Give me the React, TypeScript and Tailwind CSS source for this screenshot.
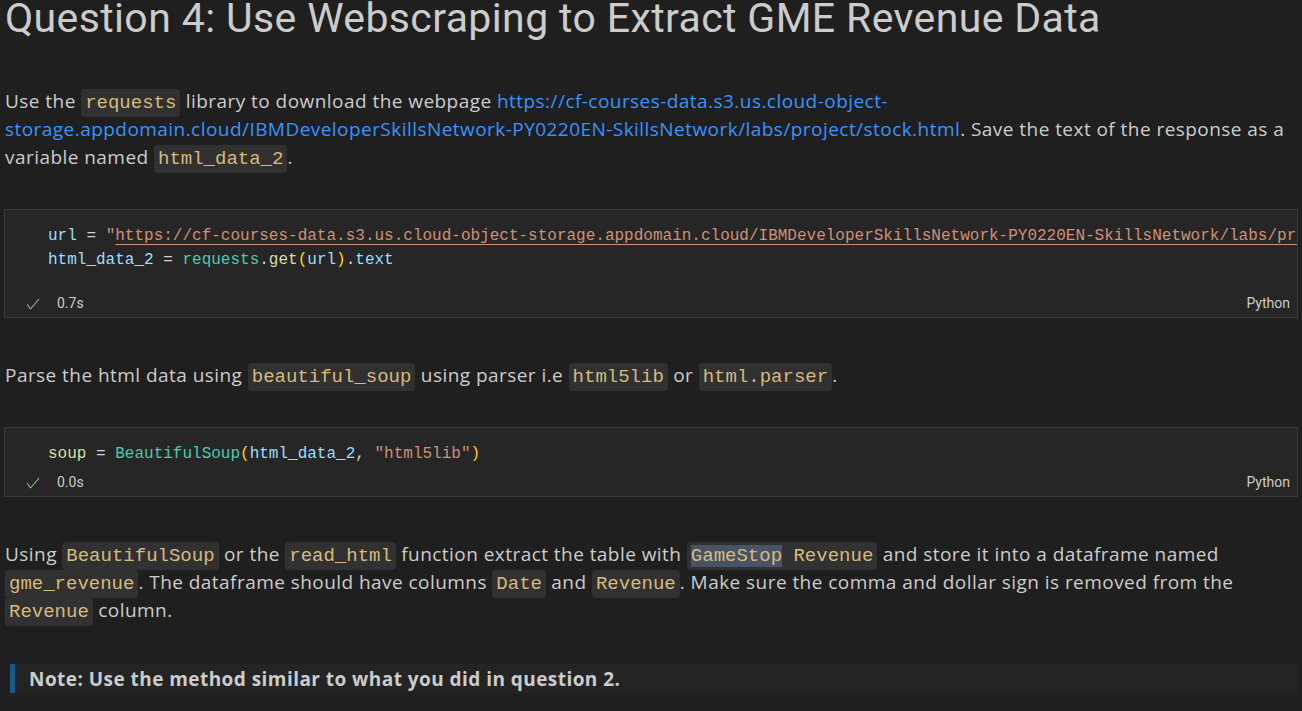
import React from "react";

const IC =
  "rounded-[4px] bg-[#313131] px-[4px] py-[3px] font-['Liberation_Mono',monospace] text-[19px] leading-none tracking-normal text-[#d7ba7d]";
const LINK = "text-[#3794ff]";
const P = "whitespace-nowrap pl-[5px] text-[19px] leading-[28px] tracking-[0.45px]";

function Check() {
  return (
    <svg width="16" height="16" viewBox="0 0 16 16" fill="#89d185">
      <path d="M14.431 3.323l-8.47 10-.79-.036-3.35-4.77.818-.574 2.978 4.24 8.051-9.506.764.646z" />
    </svg>
  );
}

function Status({ time }: { time: string }) {
  return (
    <div className="flex h-[27px] items-center pl-[20px] pr-[7px] font-['Roboto',sans-serif] text-[14px] text-[#cccccc]">
      <Check />
      <span className="ml-[16px]">{time}</span>
      <span className="ml-auto">Python</span>
    </div>
  );
}

export default function App() {
  return (
    <div className="h-[711px] w-full overflow-hidden bg-[#1f1f1f] font-['Open_Sans',sans-serif] text-[#cccccc]">
      <div className="h-[87px] pl-[5px]">
        <div className="whitespace-nowrap font-['Roboto',sans-serif] text-[41px] leading-[36px] tracking-[0.38px] text-[#cccccc]">
          Question 4: Use Webscraping to Extract GME Revenue Data
        </div>
      </div>

      <div className={P}>
        Use the <span className={IC}>requests</span> library to download the webpage{" "}
        <span className={LINK}>https://cf-courses-data.s3.us.cloud-object-</span>
        <br />
        <span className={LINK}>
          storage.appdomain.cloud/IBMDeveloperSkillsNetwork-PY0220EN-SkillsNetwork/labs/project/stock.html
        </span>
        . Save the text of the response as a
        <br />
        variable named <span className={IC}>html_data_2</span>.
      </div>

      <div className="mx-[4px] mt-[38px] overflow-hidden border border-[#3b3b3b] bg-[#262626]">
        <div className="whitespace-pre pl-[43px] pt-[14px] font-['Liberation_Mono',monospace] text-[16px] leading-[24px] text-[#d4d4d4]">
          <div>
            <span className="text-[#9cdcfe]">url</span> = <span className="text-[#ce9178]">"</span>
            <span className="text-[#ce9178] underline decoration-[#ce9178] decoration-1 underline-offset-[4px]">
              https://cf-courses-data.s3.us.cloud-object-storage.appdomain.cloud/IBMDeveloperSkillsNetwork-PY0220EN-SkillsNetwork/labs/project/stock.html
            </span>
            <span className="text-[#ce9178]">"</span>
          </div>
          <div>
            <span className="text-[#9cdcfe]">html_data_2</span> ={" "}
            <span className="text-[#4ec9b0]">requests</span>.<span className="text-[#dcdcaa]">get</span>
            <span className="text-[#ffd700]">(</span>
            <span className="text-[#9cdcfe]">url</span>
            <span className="text-[#ffd700]">)</span>.<span className="text-[#9cdcfe]">text</span>
          </div>
        </div>
        <div className="h-[18px]" />
        <Status time="0.7s" />
      </div>

      <div className={"mt-[43px] " + P}>
        Parse the html data using <span className={IC}>beautiful_soup</span> using parser i.e{" "}
        <span className={IC}>html5lib</span> or <span className={IC}>html.parser</span>.
      </div>

      <div className="mx-[4px] mt-[38px] overflow-hidden border border-[#3b3b3b] bg-[#262626]">
        <div className="whitespace-pre pl-[43px] pt-[14px] font-['Liberation_Mono',monospace] text-[16px] leading-[24px] text-[#d4d4d4]">
          <div>
            <span className="text-[#dcdcaa]">soup</span> ={" "}
            <span className="text-[#4ec9b0]">BeautifulSoup</span>
            <span className="text-[#ffd700]">(</span>
            <span className="text-[#9cdcfe]">html_data_2</span>,{" "}
            <span className="text-[#ce9178]">"html5lib"</span>
            <span className="text-[#ffd700]">)</span>
          </div>
        </div>
        <div className="h-[3px]" />
        <Status time="0.0s" />
      </div>

      <div className={"mt-[43px] " + P}>
        Using <span className={IC}>BeautifulSoup</span> or the <span className={IC}>read_html</span> function
        extract the table with{" "}
        <span className={IC}>
          <span className="bg-[#485465]">GameStop</span> Revenue
        </span>{" "}
        and store it into a dataframe named
        <br />
        <span className={IC}>gme_revenue</span>. The dataframe should have columns{" "}
        <span className={IC}>Date</span> and <span className={IC}>Revenue</span>. Make sure the comma and
        dollar sign is removed from the
        <br />
        <span className={IC}>Revenue</span> column.
      </div>

      <div className="ml-[10px] mr-[4px] mt-[40px] flex h-[29px] bg-[#242424]">
        <div className="w-[5px] bg-[#17598a]" />
        <div className="flex items-center whitespace-nowrap pl-[14px] pt-[2px] text-[19px] font-bold tracking-[0.45px] text-[#cccccc]">
          Note: Use the method similar to what you did in question 2.
        </div>
      </div>
    </div>
  );
}
